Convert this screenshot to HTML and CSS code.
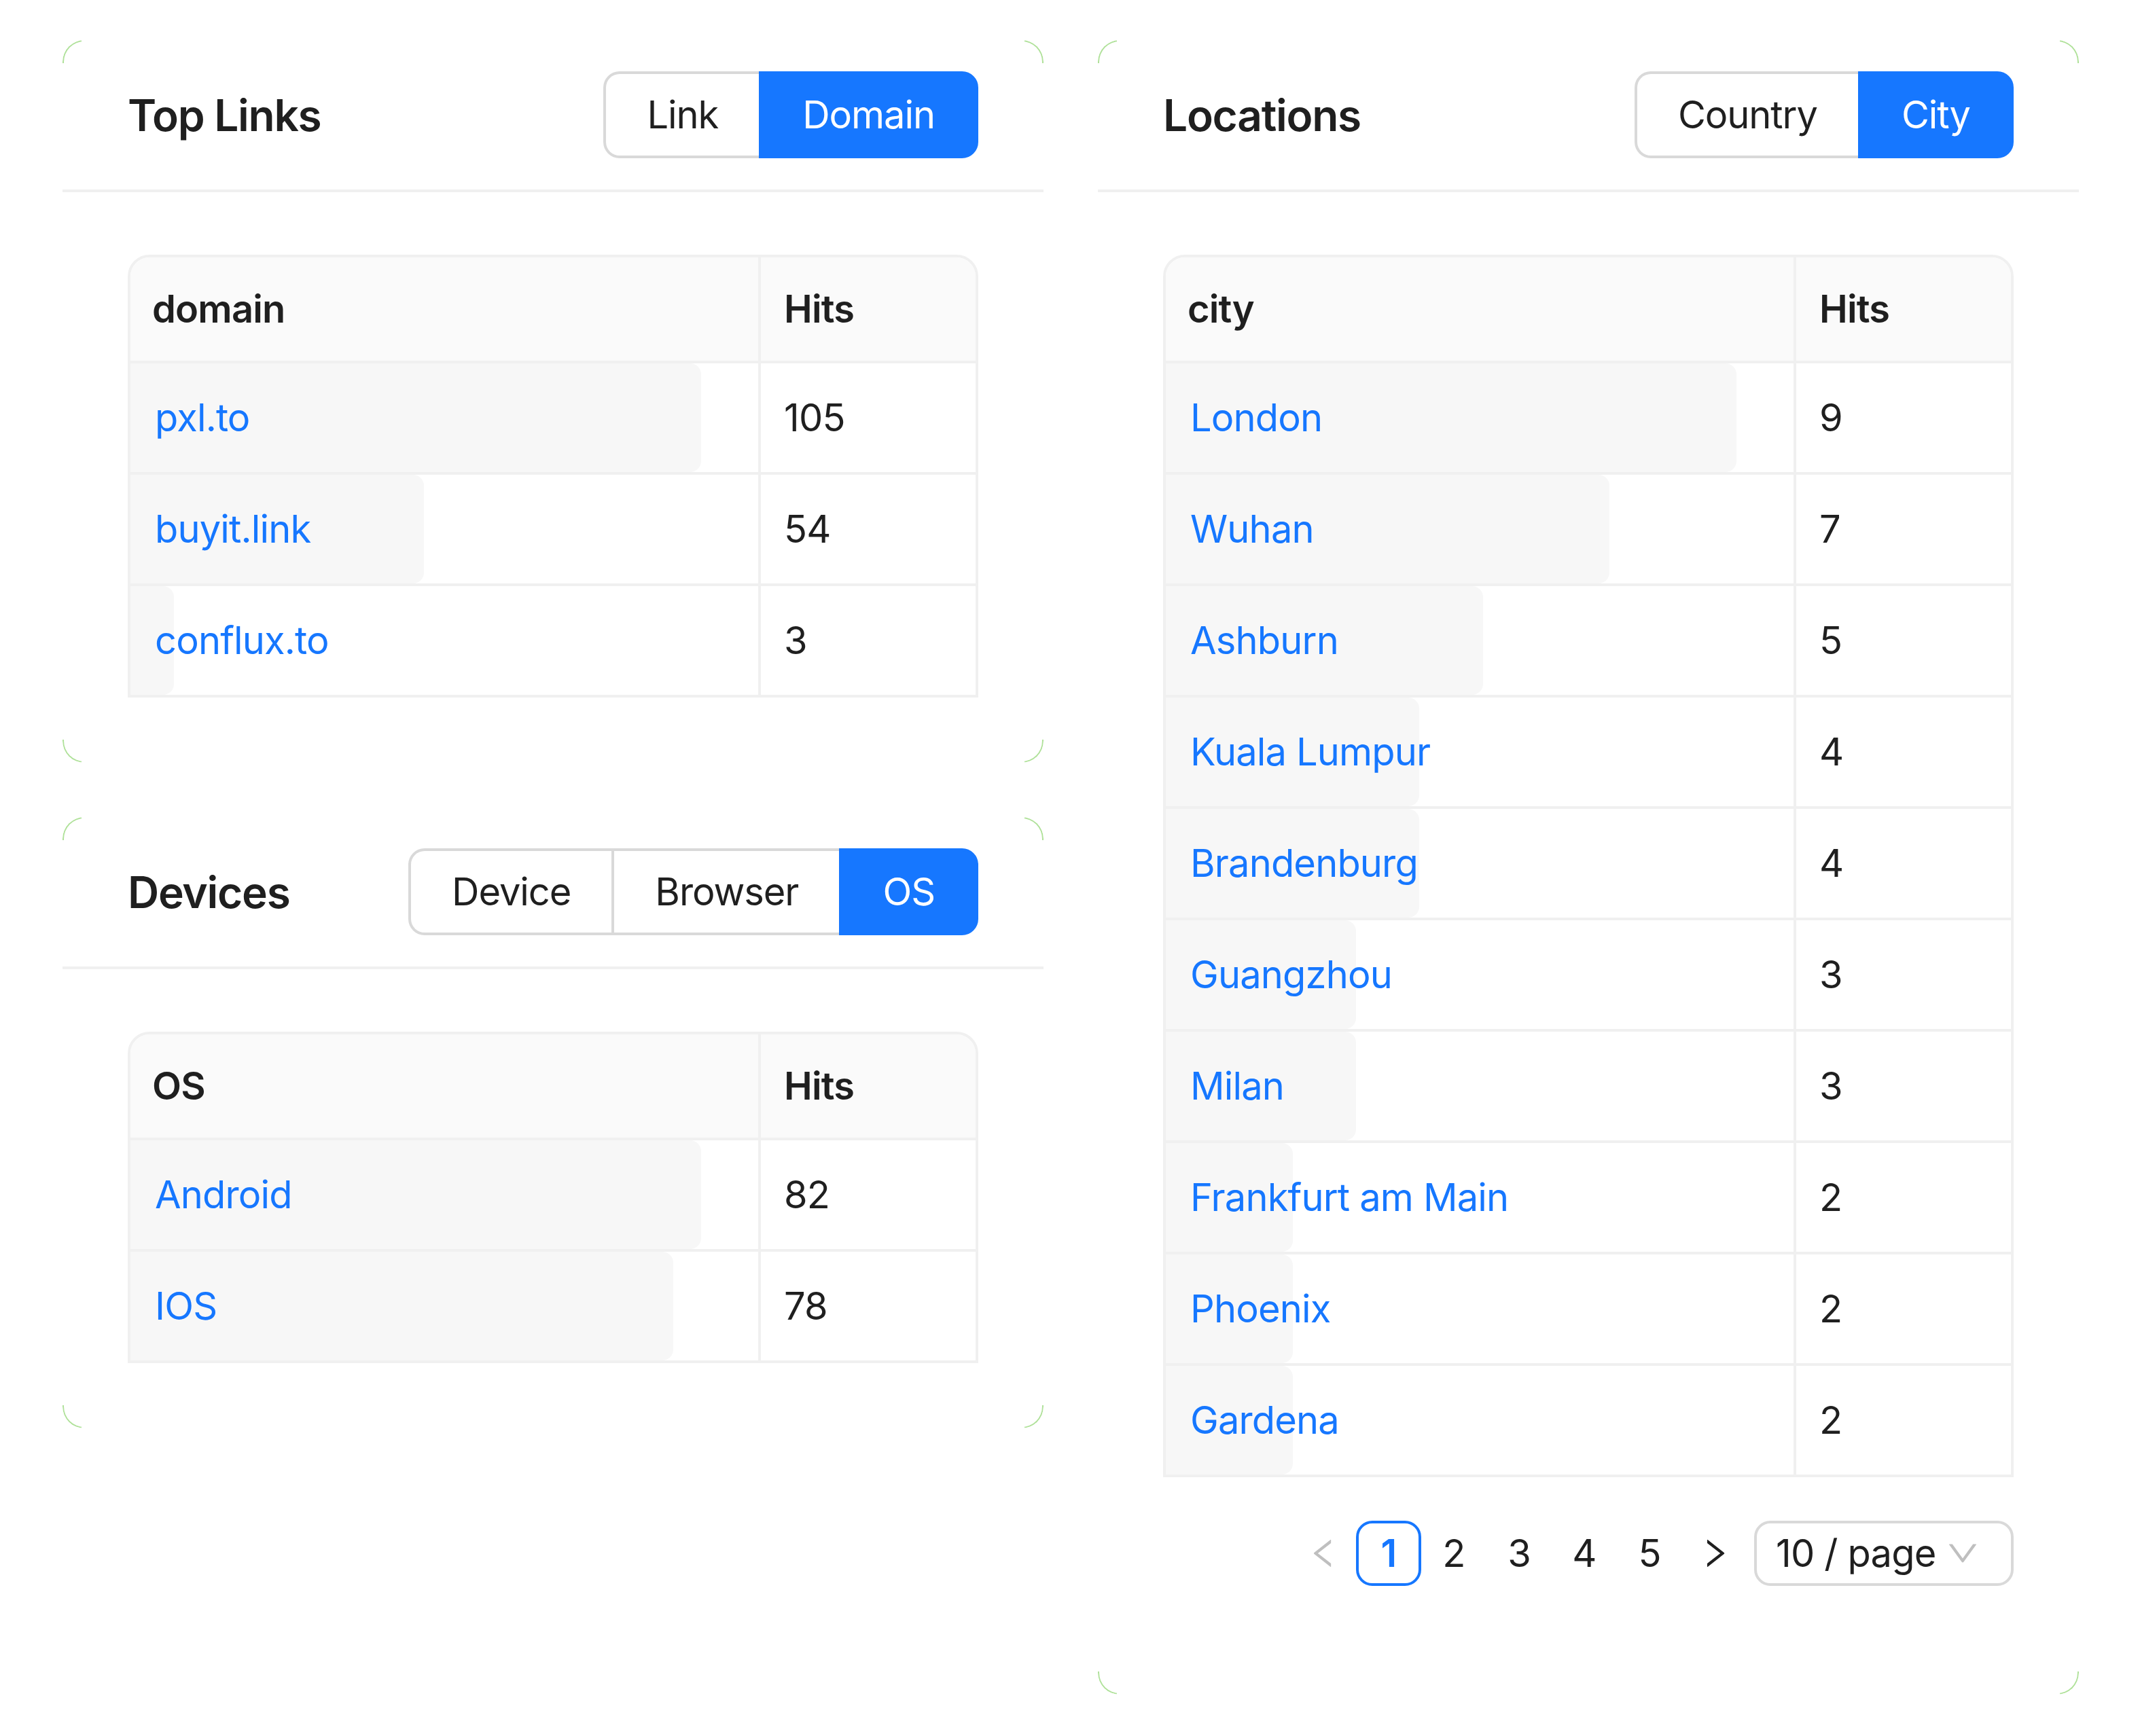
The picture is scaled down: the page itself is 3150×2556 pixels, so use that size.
FILE: index.html
```html
<!DOCTYPE html>
<html lang="en">
<head>
<meta charset="utf-8">
<title>Stats</title>
<link rel="stylesheet" href="styles.css">
</head>
<body>
<div class="page">
  <div class="col">
    <section class="card">
      <div class="card-head">
        <div class="card-title">Top Links</div>
        <div class="radio-group">
          <span class="rb">Link</span>
          <span class="rb on">Domain</span>
        </div>
      </div>
      <div class="card-body">
        <div class="tbl">
          <div class="tr head"><div class="th c1">domain</div><div class="th c2">Hits</div></div>
          <div class="tr"><div class="td c1"><span class="bar" style="width:840px"></span><a class="lnk">pxl.to</a></div><div class="td c2">105</div></div>
          <div class="tr"><div class="td c1"><span class="bar" style="width:432px"></span><a class="lnk">buyit.link</a></div><div class="td c2">54</div></div>
          <div class="tr"><div class="td c1"><span class="bar" style="width:64px"></span><a class="lnk">conflux.to</a></div><div class="td c2">3</div></div>
        </div>
      </div>
    </section>
    <section class="card">
      <div class="card-head">
        <div class="card-title">Devices</div>
        <div class="radio-group">
          <span class="rb">Device</span>
          <span class="rb">Browser</span>
          <span class="rb on">OS</span>
        </div>
      </div>
      <div class="card-body">
        <div class="tbl">
          <div class="tr head"><div class="th c1">OS</div><div class="th c2">Hits</div></div>
          <div class="tr"><div class="td c1"><span class="bar" style="width:840px"></span><a class="lnk">Android</a></div><div class="td c2">82</div></div>
          <div class="tr"><div class="td c1"><span class="bar" style="width:799px"></span><a class="lnk">IOS</a></div><div class="td c2">78</div></div>
        </div>
      </div>
    </section>
  </div>
  <div class="col">
    <section class="card">
      <div class="card-head">
        <div class="card-title">Locations</div>
        <div class="radio-group">
          <span class="rb">Country</span>
          <span class="rb on">City</span>
        </div>
      </div>
      <div class="card-body">
        <div class="tbl">
          <div class="tr head"><div class="th c1">city</div><div class="th c2">Hits</div></div>
          <div class="tr"><div class="td c1"><span class="bar" style="width:840px"></span><a class="lnk">London</a></div><div class="td c2">9</div></div>
          <div class="tr"><div class="td c1"><span class="bar" style="width:653px"></span><a class="lnk">Wuhan</a></div><div class="td c2">7</div></div>
          <div class="tr"><div class="td c1"><span class="bar" style="width:467px"></span><a class="lnk">Ashburn</a></div><div class="td c2">5</div></div>
          <div class="tr"><div class="td c1"><span class="bar" style="width:373px"></span><a class="lnk">Kuala Lumpur</a></div><div class="td c2">4</div></div>
          <div class="tr"><div class="td c1"><span class="bar" style="width:373px"></span><a class="lnk">Brandenburg</a></div><div class="td c2">4</div></div>
          <div class="tr"><div class="td c1"><span class="bar" style="width:280px"></span><a class="lnk">Guangzhou</a></div><div class="td c2">3</div></div>
          <div class="tr"><div class="td c1"><span class="bar" style="width:280px"></span><a class="lnk">Milan</a></div><div class="td c2">3</div></div>
          <div class="tr"><div class="td c1"><span class="bar" style="width:187px"></span><a class="lnk">Frankfurt am Main</a></div><div class="td c2">2</div></div>
          <div class="tr"><div class="td c1"><span class="bar" style="width:187px"></span><a class="lnk">Phoenix</a></div><div class="td c2">2</div></div>
          <div class="tr"><div class="td c1"><span class="bar" style="width:187px"></span><a class="lnk">Gardena</a></div><div class="td c2">2</div></div>
        </div>
        <div class="pager">
          <span class="pg arrow disabled"><svg viewBox="0 0 1024 1024" width="54" height="54"><path fill="currentColor" d="M724 218.3V141c0-6.7-7.7-10.4-12.9-6.3L260.3 486.8a31.86 31.86 0 000 50.3l450.8 352.1c5.3 4.1 12.9.4 12.9-6.3v-77.3c0-4.9-2.3-9.6-6.1-12.6l-360-281 360-281.1c3.8-3 6.1-7.7 6.1-12.6z"/></svg></span>
          <span class="pg cur">1</span>
          <span class="pg">2</span>
          <span class="pg">3</span>
          <span class="pg">4</span>
          <span class="pg">5</span>
          <span class="pg arrow"><svg viewBox="0 0 1024 1024" width="54" height="54"><path fill="currentColor" d="M765.7 486.8L314.9 134.7A7.97 7.97 0 00302 141v77.3c0 4.9 2.3 9.6 6.1 12.6l360 281.1-360 281.1c-3.9 3-6.1 7.7-6.1 12.6V883c0 6.6 7.6 10.3 12.9 6.3l450.8-352.1a31.96 31.96 0 000-50.4z"/></svg></span>
          <span class="size"><span>10 / page</span><svg class="down" viewBox="0 0 1024 1024" width="54" height="54"><path fill="currentColor" d="M884 256h-75c-5.1 0-9.9 2.5-12.9 6.6L512 654.2 227.9 262.6c-3-4.1-7.8-6.6-12.9-6.6h-75c-6.5 0-10.3 7.4-6.5 12.7l352.6 486.1c12.8 17.6 39 17.6 51.7 0l352.6-486.1c3.9-5.3.1-12.7-6.4-12.7z"/></svg></span>
        </div>
      </div>
    </section>
  </div>
</div>
</body>
</html>
```

FILE: styles.css
```css
* { box-sizing: border-box; }

body {
  margin: 0;
  background: #ffffff;
  font-family: Inter, "Noto Sans", "Liberation Sans", sans-serif;
  font-size: 56px;
  letter-spacing: -0.015em;
  color: #1f1f1f;
}

.page {
  display: grid;
  grid-template-columns: 1444px 1444px;
  column-gap: 80px;
  align-items: start;
  padding: 59px 0 0 92px;
}

.col {
  display: flex;
  flex-direction: column;
  gap: 80px;
}

.card {
  position: relative;
  background: #ffffff;
  border-radius: 32px;
}

.card::before,
.card::after {
  content: "";
  position: absolute;
  left: 0;
  right: 0;
  height: 32px;
  border: 2px solid rgba(110, 200, 70, 0.55);
  -webkit-mask-image: linear-gradient(90deg, #000 28px, transparent 28px, transparent calc(100% - 28px), #000 calc(100% - 28px));
  mask-image: linear-gradient(90deg, #000 28px, transparent 28px, transparent calc(100% - 28px), #000 calc(100% - 28px));
  pointer-events: none;
}

.card::before {
  top: 0;
  border-bottom: 0;
  border-radius: 32px 32px 0 0;
}

.card::after {
  bottom: 0;
  border-top: 0;
  border-radius: 0 0 32px 32px;
}

.card-head {
  height: 224px;
  border-bottom: 4px solid #f0f0f0;
  padding: 0 96px;
  display: flex;
  align-items: center;
  justify-content: space-between;
}

.card-title {
  font-size: 64px;
  font-weight: 600;
  letter-spacing: -0.02em;
  color: #1f1f1f;
}

.card-body {
  padding: 92px 96px 96px;
}

.radio-group {
  display: flex;
}

.rb {
  height: 128px;
  line-height: 120px;
  padding: 0 60px;
  border: 4px solid #d9d9d9;
  border-right-width: 0;
  background: #ffffff;
  color: #1f1f1f;
  white-space: nowrap;
  letter-spacing: -0.019em;
}

.rb:first-child {
  border-radius: 24px 0 0 24px;
}

.rb:last-child {
  border-right-width: 4px;
  border-radius: 0 24px 24px 0;
}

.rb.on {
  background: #1677ff;
  border-color: #1677ff;
  color: #ffffff;
}

.tbl {
  border: 4px solid #f0f0f0;
  border-radius: 32px 32px 0 0;
  overflow: hidden;
}

.tr {
  display: grid;
  grid-template-columns: 928px 1fr;
}

.tr + .tr {
  border-top: 4px solid #f0f0f0;
}

.th,
.td {
  display: flex;
  align-items: center;
  white-space: nowrap;
}

.th {
  height: 152px;
  background: #fafafa;
  font-weight: 600;
  padding: 0 32px;
}

.td {
  height: 160px;
  position: relative;
  padding: 0 32px;
}

.c1 {
  border-right: 4px solid #f0f0f0;
}

.td.c1 {
  padding-left: 36px;
}

.td.c2,
.th.c2 {
  padding-left: 34px;
}

.bar {
  position: absolute;
  left: 0;
  top: 0;
  bottom: 0;
  background: #f7f7f7;
  border-radius: 0 16px 16px 0;
}

.lnk {
  position: relative;
  color: #1677ff;
  text-decoration: none;
}

.pager {
  display: flex;
  justify-content: flex-end;
  align-items: center;
  margin: 64px 0 64px;
}

.pg {
  width: 96px;
  height: 96px;
  display: flex;
  align-items: center;
  justify-content: center;
  border-radius: 24px;
  color: #1f1f1f;
}

.pg.cur {
  border: 4px solid #1677ff;
  color: #1677ff;
  font-weight: 600;
}

.pg.disabled {
  color: #bfbfbf;
}

.size {
  margin-left: 10px;
  width: 382px;
  height: 96px;
  border: 4px solid #d9d9d9;
  border-radius: 24px;
  display: flex;
  align-items: center;
  justify-content: space-between;
  padding: 0 44px 0 28px;
  white-space: nowrap;
}

.down {
  color: #bfbfbf;
}
```
